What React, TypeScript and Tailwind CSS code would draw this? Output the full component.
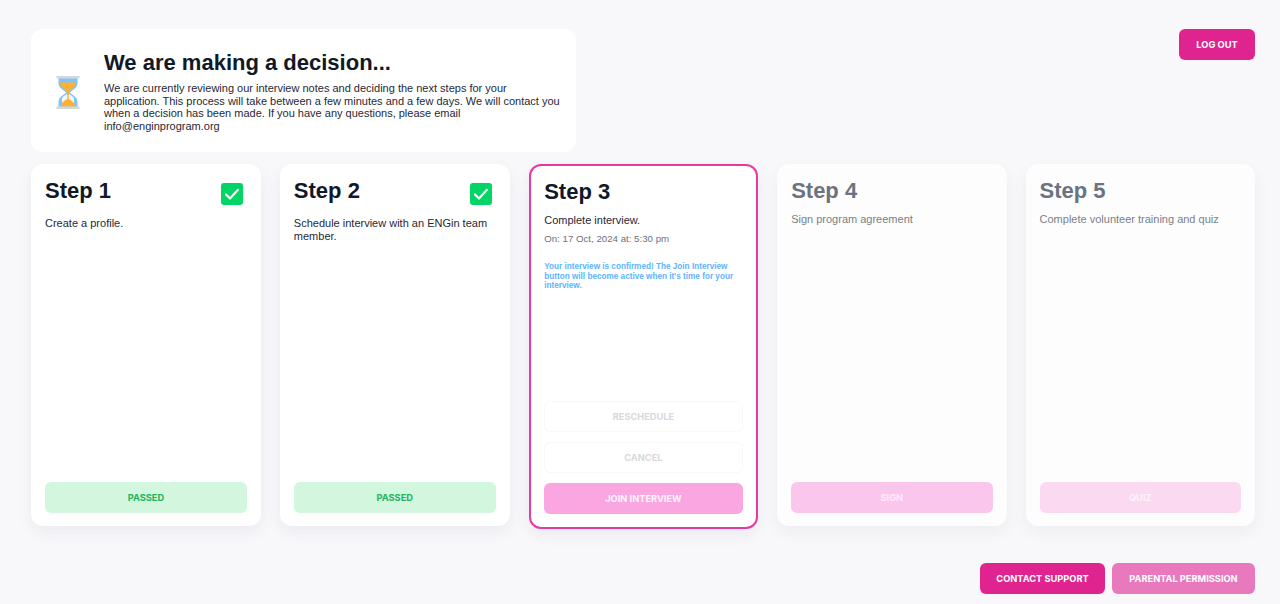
import React from "react";

const sans = "font-['Liberation_Sans',Arial,sans-serif]";
const btnFont = "font-['Inter',sans-serif] font-bold uppercase text-[9.250px]";

function Hourglass() {
  return (
    <svg width="24" height="33" viewBox="0 0 24 33" className="mt-[3px] shrink-0">
      {/* glass */}
      <path d="M2.500 2h19v5.500c0 4.500-5.500 6.500-7.500 9 2 2.500 7.500 4.500 7.500 9V31h-19v-5.500c0-4.500 5.500-6.500 7.500-9-2-2.500-7.500-4.500-7.500-9z" fill="#7fc4fb" />
      <path d="M6 22c1.500-2 4.500-3.500 5.500-5h1c1 1.500 4 3 5.500 5v8H6z" fill="#eef7fe" />
      {/* sand */}
      <path d="M4 6.500h16c.5 4.500-5.500 6-7 9.500v3h-2v-3c-1.500-3.500-7.500-5-7-9.500z" fill="#ffb02e" />
      <path d="M11.300 19h1.400v4c2 1 6.300 3.500 6.800 7.500h-15c.5-4 4.800-6.500 6.800-7.500z" fill="#ffb02e" />
      <rect x="0.500" y="0" width="23" height="2.500" fill="#d5d8db" />
      <rect x="0.500" y="30.500" width="23" height="2.500" fill="#d5d8db" />
    </svg>
  );
}

function Check() {
  return (
    <div className="w-[22px] h-[22px] rounded-[3px] bg-[#00d566] flex items-center justify-center">
      <svg width="16" height="14" viewBox="0 0 16 14" fill="none">
        <path d="M2 7.500 6 11.500 14 2.800" stroke="#ffffff" strokeWidth="2.200" strokeLinecap="round" strokeLinejoin="round" />
      </svg>
    </div>
  );
}

function DoneCard({ title, text }: { title: string; text: string }) {
  return (
    <div className="w-[230px] h-[362px] bg-white rounded-xl shadow-[0_6px_16px_rgba(30,30,60,0.06)] px-[14px] pt-[14px] pb-[13px] flex flex-col">
      <div className="flex justify-between items-start">
        <h2 className="text-[22px] leading-[25px] font-bold text-[#111827]">{title}</h2>
        <div className="mt-[5px] mr-[4px]"><Check /></div>
      </div>
      <p className="mt-[12px] text-[11px] leading-[13px] text-[#1f2937] pr-[4px]">{text}</p>
      <div className="mt-auto h-[31px] rounded-md bg-[#d2f6de] text-[#22b45e] flex items-center justify-center">
        <span className={btnFont}>Passed</span>
      </div>
    </div>
  );
}

function LockedCard({ title, text, btn, btnBg }: { title: string; text: string; btn: string; btnBg: string }) {
  return (
    <div className="w-[229.600px] h-[362px] bg-[#fdfdfe] rounded-xl shadow-[0_6px_16px_rgba(30,30,60,0.05)] px-[14px] pt-[14px] pb-[13px] flex flex-col">
      <h2 className="text-[22px] leading-[25px] font-bold text-[#6b7280]">{title}</h2>
      <p className="mt-[10px] text-[11px] leading-[13px] text-[#7b7f87]">{text}</p>
      <div className={`mt-auto h-[31px] rounded-md ${btnBg} text-white/70 flex items-center justify-center`}>
        <span className={btnFont}>{btn}</span>
      </div>
    </div>
  );
}

export default function App() {
  return (
    <div className={`${sans} w-[1280px] h-[604px] overflow-hidden bg-[#f8f8fb] pt-[29px] pr-[25px] pl-[31px] flex flex-col`}>
      <div className="flex justify-between items-start">
        <div className="w-[545px] h-[123px] bg-white rounded-xl flex items-center pl-[25px]">
          <Hourglass />
          <div className="ml-[24px] w-[460px]">
            <h1 className="text-[22px] leading-[28px] font-bold text-[#111827] whitespace-nowrap">We are making a decision...</h1>
            <p className="mt-[5px] text-[11px] leading-[12.500px] text-[#1f2937]">
              We are currently reviewing our interview notes and deciding the next steps for your application. This process will take between a few minutes and a few days. We will contact you when a decision has been made. If you have any questions, please email info@enginprogram.org
            </p>
          </div>
        </div>
        <button className="w-[76px] h-[31px] rounded-md bg-[#e0248f] text-white flex items-center justify-center">
          <span className={btnFont}>Log out</span>
        </button>
      </div>

      <div className="mt-[12px] flex gap-[19px]">
        <DoneCard title="Step 1" text="Create a profile." />
        <DoneCard title="Step 2" text="Schedule interview with an ENGin team member." />

        <div className="w-[229.600px] h-[365px] bg-white rounded-xl border-2 border-[#e63a9f] shadow-[0_6px_16px_rgba(30,30,60,0.06)] px-[13.500px] pt-[13px] pb-[13px] flex flex-col">
          <h2 className="text-[22px] leading-[25px] font-bold text-[#111827]">Step 3</h2>
          <p className="mt-[10px] text-[11px] leading-[13px] text-[#1f2937]">Complete interview.</p>
          <p className="mt-[5px] text-[9.700px] leading-[14px] text-[#6b7280]">On: 17 Oct, 2024 at: 5:30 pm</p>
          <p className="mt-[16px] text-[8.200px] leading-[9.500px] font-bold text-[#60b3ff]">
            Your interview is confirmed! The Join Interview button will become active when it's time for your interview.
          </p>
          <div className="mt-auto flex flex-col gap-[10px]">
            <div className="h-[31px] rounded-md border border-[#f8f8fa] text-[#d8d9dc] flex items-center justify-center">
              <span className={btnFont}>Reschedule</span>
            </div>
            <div className="h-[31px] rounded-md border border-[#f8f8fa] text-[#d8d9dc] flex items-center justify-center">
              <span className={btnFont}>Cancel</span>
            </div>
            <div className="h-[31px] rounded-md bg-[#faa6e0] text-white/90 flex items-center justify-center">
              <span className={btnFont}>Join interview</span>
            </div>
          </div>
        </div>

        <LockedCard title="Step 4" text="Sign program agreement" btn="Sign" btnBg="bg-[#fac6ec]" />
        <LockedCard title="Step 5" text="Complete volunteer training and quiz" btn="Quiz" btnBg="bg-[#fbd9f1]" />
      </div>

      <div className="mt-[34px] flex justify-end gap-[7px]">
        <button className="w-[125px] h-[31px] rounded-md bg-[#e0248f] text-white flex items-center justify-center">
          <span className={btnFont}>Contact support</span>
        </button>
        <button className="w-[143px] h-[31px] rounded-md bg-[#e879bc] text-white flex items-center justify-center">
          <span className={btnFont}>Parental permission</span>
        </button>
      </div>
    </div>
  );
}
